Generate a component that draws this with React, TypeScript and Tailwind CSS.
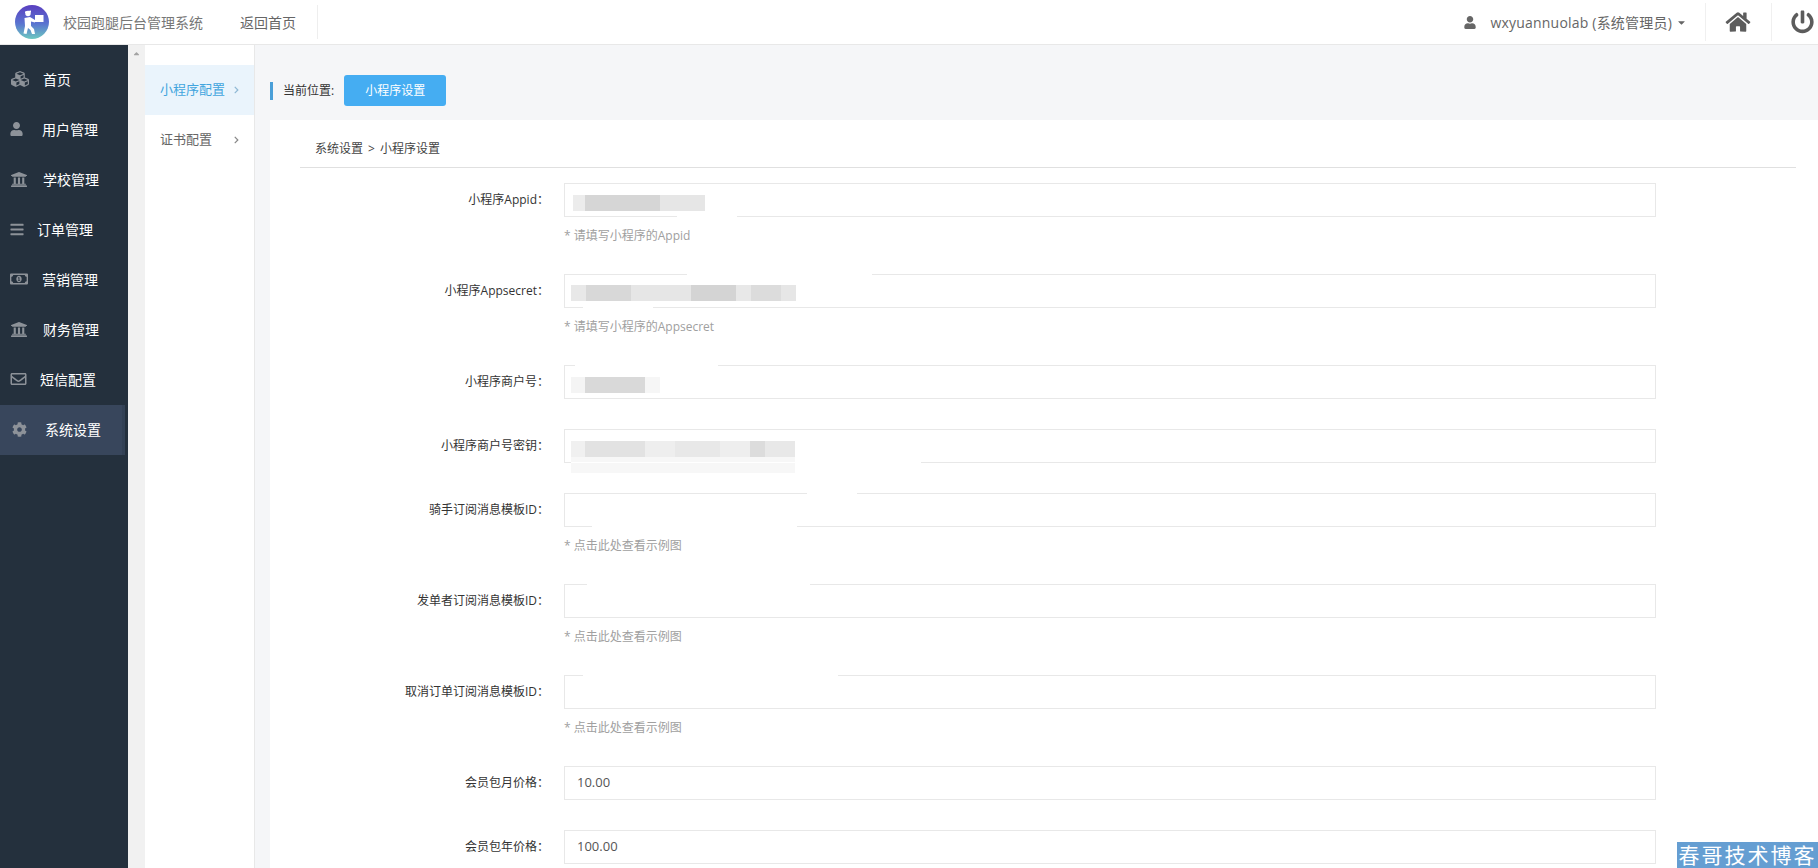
import React from "react";
import { FaCubes, FaUser, FaUniversity, FaBars, FaRegMoneyBillAlt, FaRegEnvelope, FaCog, FaHome, FaPowerOff, FaCaretDown, FaCaretUp, FaChevronRight } from "react-icons/fa";

const FONT = "[font-family:'Open_Sans','Noto_Sans_CJK_SC',sans-serif]";

type Seg = [number, string];
type Patch = [number, number];

const Blur = ({ segs, offset }: { segs: Seg[]; offset: string }) => (
  <div className={`absolute left-[6px] flex h-[16px] ${offset}`}>
    {segs.map(([w, c], i) => (
      <div key={i} style={{ width: w, backgroundColor: c }} />
    ))}
  </div>
);

const nav = [
  { icon: <FaCubes className="w-[20px] h-[18px]" />, t: "首页", cls: "ml-[13px]" },
  { icon: <FaUser className="w-[13px] h-[14px]" />, t: "用户管理", cls: "ml-[19px]" },
  { icon: <FaUniversity className="w-[18px] h-[17px]" />, t: "学校管理", cls: "ml-[15px]" },
  { icon: <FaBars className="w-[14px] h-[15px]" />, t: "订单管理", cls: "ml-[13px]" },
  { icon: <FaRegMoneyBillAlt className="w-[18px] h-[16px]" />, t: "营销管理", cls: "ml-[14px]" },
  { icon: <FaUniversity className="w-[18px] h-[17px]" />, t: "财务管理", cls: "ml-[15px]" },
  { icon: <FaRegEnvelope className="w-[17px] h-[16px]" />, t: "短信配置", cls: "ml-[13px]" },
  { icon: <FaCog className="w-[15px] h-[15px] ml-[2px]" />, t: "系统设置", cls: "ml-[18px]", active: true },
];

const Row = ({ label, hint, value, children, top = [], bottom = [] }: { label: string; hint?: string; value?: string; children?: React.ReactNode; top?: Patch[]; bottom?: Patch[] }) => (
  <div className="flex mb-[30px]">
    <label className="w-[249px] h-[34px] flex items-center justify-end text-[12px] text-[#333]">{label}</label>
    <div className="ml-[15px] w-[1092px]">
      <div className="relative h-[34px] border border-[#e8e8e8] pl-[12px] flex items-center text-[13px] text-[#555]">
        {value}
        {children}
        {top.map(([l, w]) => (
          <div key={l} className="absolute top-[-1px] h-px bg-white" style={{ left: l, width: w }} />
        ))}
        {bottom.map(([l, w]) => (
          <div key={l} className="absolute bottom-[-1px] h-px bg-white" style={{ left: l, width: w }} />
        ))}
      </div>
      {hint && <div className="mt-[10px] h-[17px] leading-[17px] text-[12px] text-[#a0a0a0]">{hint}</div>}
    </div>
  </div>
);

const Logo = () => (
  <svg viewBox="0 0 34 34" className="w-[34px] h-[34px] shrink-0">
    <defs>
      <linearGradient id="lg" x1="0" y1="0" x2="0" y2="1">
        <stop offset="0" stopColor="#5a3fc0" />
        <stop offset="0.55" stopColor="#5a74d0" />
        <stop offset="1" stopColor="#6cc8c0" />
      </linearGradient>
    </defs>
    <circle cx="17" cy="17" r="17" fill="url(#lg)" />
    <circle cx="13" cy="8.5" r="2.7" fill="#fff" />
    <path d="M10 6.5 L16 5.5 L16 7.5 L10 8 Z" fill="#fff" />
    <rect x="20" y="10" width="8.5" height="7" fill="#fff" />
    <path d="M9.5 13 L15 12 L20 15 L20 17.5 L16 16.5 L16 21 L19 24 L20 29 L17 29 L15.5 25 L13 23 L11.5 29 L8.5 28.5 L10 21 Z" fill="#fff" />
  </svg>
);

export default function App() {
  return (
    <div className={`h-screen overflow-hidden relative flex flex-col bg-[#f5f6f8] ${FONT}`}>
      <header className="h-[45px] shrink-0 bg-white border-b border-[#e8e8e8] flex items-center text-[#666]">
        <div className="ml-[15px]"><Logo /></div>
        <span className="ml-[14px] text-[14px] text-[#777]">校园跑腿后台管理系统</span>
        <span className="ml-[37px] text-[14px] text-[#666]">返回首页</span>
        <div className="ml-[21px] w-px h-[34px] bg-[#eeeeee]" />
        <div className="ml-auto flex items-center h-full">
          <FaUser className="w-[12px] h-[13px] text-[#666]" />
          <span className="ml-[14px] text-[14px] tracking-[0.2px] text-[#666]">wxyuannuolab (系统管理员)</span>
          <FaCaretDown className="ml-[4px] w-[11px] h-[11px] text-[#666]" />
          <div className="ml-[18px] w-px h-[38px] bg-[#f0f0f0]" />
          <FaHome className="ml-[19px] w-[26px] h-[22px] text-[#5c5c5c]" />
          <div className="ml-[20px] w-px h-[38px] bg-[#f0f0f0]" />
          <FaPowerOff className="ml-[19px] mr-[4px] w-[23px] h-[24px] text-[#5c5c5c]" />
        </div>
      </header>
      <div className="flex flex-1 min-h-0">
        <aside className="w-[128px] shrink-0 bg-[#24303d] pt-[10px]">
          {nav.map((n) => (
            <div key={n.t} className={`h-[50px] flex items-center pl-[10px] pb-[2px] text-[14px] text-white ${n.active ? "w-[125px] bg-[#38465c] border-r-[3px] border-[#334155]" : ""}`}>
              <span className="text-[#8d9299] flex items-center">{n.icon}</span>
              <span className={n.cls}>{n.t}</span>
            </div>
          ))}
        </aside>
        <div className="w-[17px] shrink-0 bg-[#f1f1f1] flex justify-center pt-[4px]">
          <FaCaretUp className="w-[9px] h-[9px] text-[#a3a3a3]" />
        </div>
        <nav className="w-[110px] shrink-0 bg-white border-r border-[#e8e8e8] pt-[20px] text-[13px] text-[#666]">
          <div className="h-[50px] flex items-center justify-between px-[15px] bg-[#eaf4fc] text-[#42a5de]">
            <span>小程序配置</span>
            <FaChevronRight className="w-[7px] h-[8px] mr-[-1px] text-[#8fb8d4]" />
          </div>
          <div className="h-[50px] flex items-center justify-between px-[15px]">
            <span>证书配置</span>
            <FaChevronRight className="w-[7px] h-[8px] mr-[-1px] text-[#888]" />
          </div>
        </nav>
        <main className="flex-1 min-w-0 pl-[15px]">
          <div className="h-[75px] flex items-center pt-[16px]">
            <div className="w-[3px] h-[18px] bg-[#4a9fd8]" />
            <span className="ml-[10px] text-[12px] text-[#333]">当前位置:</span>
            <div className="ml-[10px] w-[102px] h-[31px] rounded-[3px] bg-[#45adf2] flex items-center justify-center text-[12px] text-white">小程序设置</div>
          </div>
          <section className="bg-white h-full pl-[30px] pr-[22px]">
            <div className="h-[48px] border-b border-[#e0e0e0] pl-[15px] pt-[20px] text-[12px] leading-[18px] text-[#444]">
              系统设置<span className="mx-[5px]">&gt;</span>小程序设置
            </div>
            <div className="pt-[15px]">
              <Row label="小程序Appid：" hint="* 请填写小程序的Appid" bottom={[[112, 60]]}>
                <Blur offset="top-[11px] ml-[2px]" segs={[[12, "#ececec"], [75, "#d6d6d6"], [45, "#e6e6e6"]]} />
              </Row>
              <Row label="小程序Appsecret：" hint="* 请填写小程序的Appsecret" top={[[122, 185]]} bottom={[[18, 70]]}>
                <Blur offset="top-[10px]" segs={[[15, "#e8e8e8"], [45, "#d8d8d8"], [60, "#e6e6e6"], [45, "#d4d4d4"], [15, "#e8e8e8"], [30, "#dcdcdc"], [15, "#e6e6e6"]]} />
              </Row>
              <Row label="小程序商户号：" top={[[10, 143]]}>
                <Blur offset="top-[11px]" segs={[[14, "#f4f4f4"], [60, "#d9d9d9"], [15, "#f6f6f6"]]} />
              </Row>
              <Row label="小程序商户号密钥：" bottom={[[6, 350]]}>
                <Blur offset="top-[11px]" segs={[[14, "#f0f0f0"], [60, "#e2e2e2"], [30, "#eeeeee"], [45, "#e8e8e8"], [30, "#eeeeee"], [15, "#dcdcdc"], [30, "#e8e8e8"]]} />
                <Blur offset="top-[27px]" segs={[[224, "#f7f7f7"]]} />
              </Row>
              <Row label="骑手订阅消息模板ID：" hint="* 点击此处查看示例图" top={[[242, 50]]} bottom={[[27, 205]]} />
              <Row label="发单者订阅消息模板ID：" hint="* 点击此处查看示例图" top={[[22, 223]]} />
              <Row label="取消订单订阅消息模板ID：" hint="* 点击此处查看示例图" top={[[18, 255]]} />
              <Row label="会员包月价格：" value="10.00" />
              <Row label="会员包年价格：" value="100.00" />
            </div>
          </section>
        </main>
      </div>
      <div className="absolute right-0 bottom-0 w-[141px] h-[26px] bg-[#659ed2] flex items-center justify-center text-[21px] leading-none tracking-[2px] text-white whitespace-nowrap">春哥技术博客</div>
    </div>
  );
}
